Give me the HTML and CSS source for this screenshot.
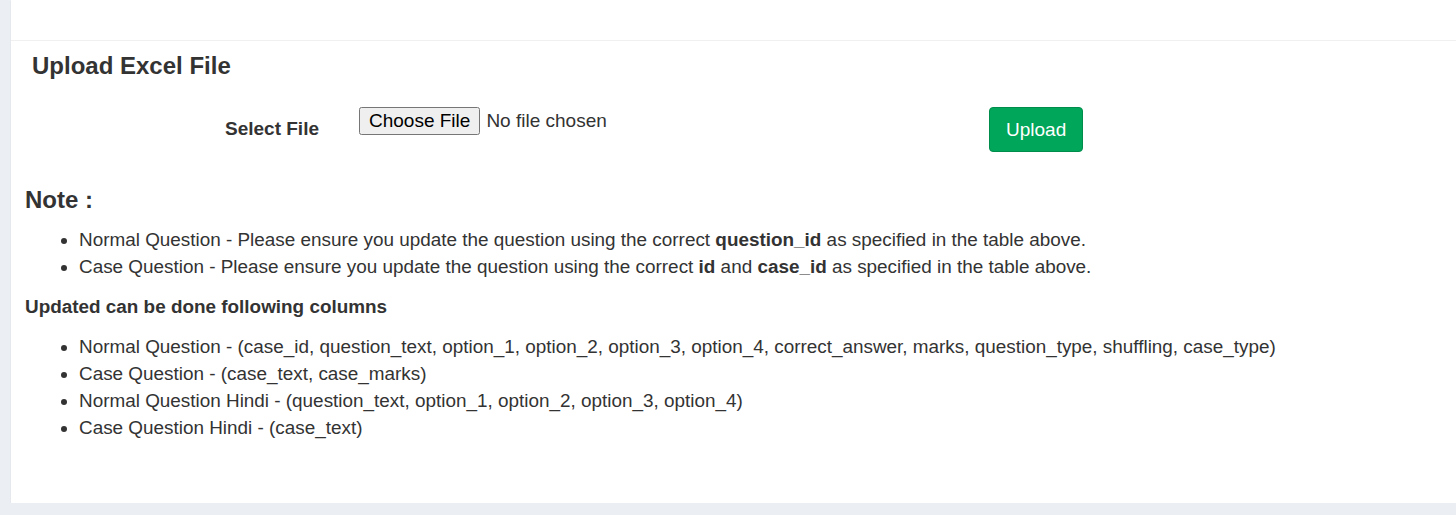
FILE: index.html
```html
<!DOCTYPE html>
<html>
<head>
<meta charset="utf-8">
<link rel="stylesheet" href="styles.css">
</head>
<body>
<div class="card">
  <div class="card-top"></div>
  <div class="card-body">
    <h3 class="title">Upload Excel File</h3>
    <form class="upload-row">
      <label class="label">Select File</label>
      <div class="file-col"><input type="file" class="file"></div>
      <div class="btn-col"><button type="button" class="btn-upload">Upload</button></div>
    </form>
    <h3 class="note">Note :</h3>
    <ul class="list">
      <li>Normal Question - Please ensure you update the question using the correct <b>question_id</b> as specified in the table above.</li>
      <li>Case Question - Please ensure you update the question using the correct <b>id</b> and <b>case_id</b> as specified in the table above.</li>
    </ul>
    <h5 class="sub">Updated can be done following columns</h5>
    <ul class="list list2">
      <li>Normal Question - (case_id, question_text, option_1, option_2, option_3, option_4, correct_answer, marks, question_type, shuffling, case_type)</li>
      <li>Case Question - (case_text, case_marks)</li>
      <li>Normal Question Hindi - (question_text, option_1, option_2, option_3, option_4)</li>
      <li>Case Question Hindi - (case_text)</li>
    </ul>
  </div>
</div>
</body>
</html>
```
FILE: styles.css
```css
html, body {
  margin: 0;
  padding: 0;
  background: #ebeef2;
  font-family: "Liberation Sans", Arial, sans-serif;
  color: #333;
  font-size: 18.9px;
}
.card {
  margin-left: 11px;
  background: #fff;
  height: 503px;
  box-shadow: 0 1px 1px rgba(0,0,0,0.15);
}
.card-top {
  height: 40px;
  border-bottom: 1px solid #f0f0f0;
}
.card-body {
  padding: 0 14px;
}
.title {
  margin: 0;
  padding: 10px 0 0 7px;
  font-size: 24px;
  font-weight: bold;
  line-height: 30px;
}
.upload-row {
  display: flex;
  align-items: flex-start;
  margin-top: 26px;
}
.label {
  width: 294px;
  text-align: right;
  font-weight: bold;
  font-size: 19px;
  padding-top: 12px;
  line-height: 20px;
}
.file-col {
  margin-left: 40px;
  width: 630px;
}
.file {
  font-family: "Liberation Sans", Arial, sans-serif;
  font-size: 19px;
  color: #333;
}
.file::file-selector-button {
  font-family: "Liberation Sans", Arial, sans-serif;
  font-size: 19px;
  padding: 1px 8px;
  margin-right: 6px;
}
.btn-upload {
  font-family: "Liberation Sans", Arial, sans-serif;
  font-size: 19px;
  line-height: 21px;
  color: #fff;
  background: #00a65a;
  border: 1px solid #008d4c;
  border-radius: 4px;
  padding: 11px 16px;
}
.note {
  margin: 33px 0 0;
  font-size: 24px;
  font-weight: bold;
  line-height: 30px;
}
.list {
  margin: 11px 0 0;
  padding-left: 54px;
  line-height: 27px;
}
.list2 {
  margin-top: 12px;
}
.sub {
  margin: 13px 0 0;
  font-size: 18.9px;
  font-weight: bold;
  line-height: 28px;
}
```
